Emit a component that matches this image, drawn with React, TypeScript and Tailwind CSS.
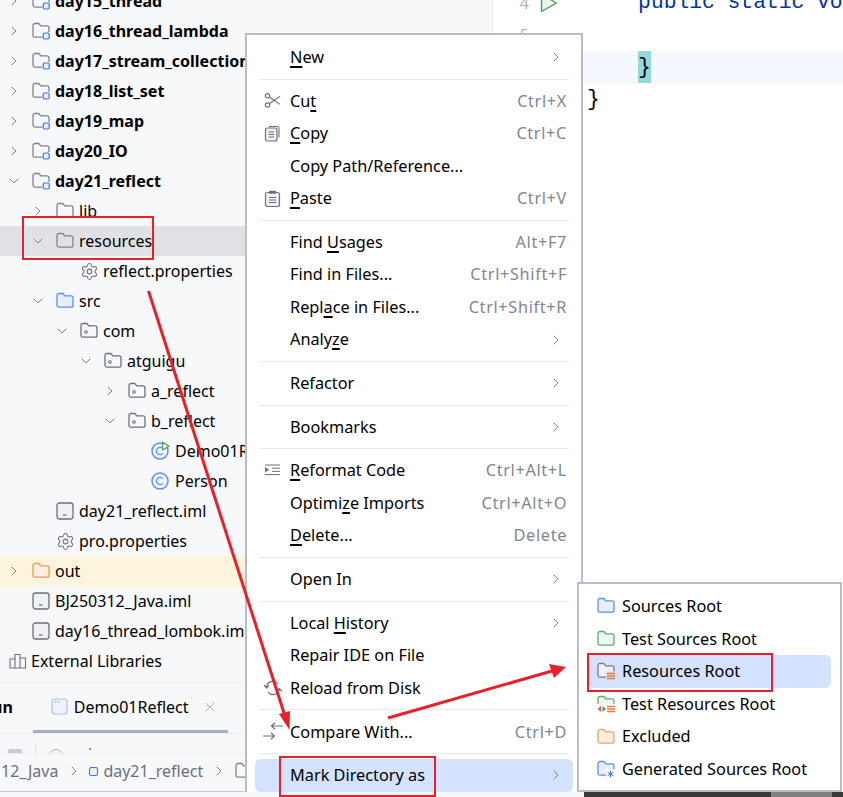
import { ChevronDown, ChevronRight, Settings, X } from 'lucide-react'

const FONT = "font-['Noto_Sans','Open_Sans',sans-serif]"

// ── Icons ─────────────────────────────────────────────────────────────────────
const FOLDER = 'M1 3.500a2 2 0 0 1 2-2h3.800l2 2.400h6.200a2 2 0 0 1 2 2v7.300a2 2 0 0 1-2 2h-12a2 2 0 0 1-2-2z'

function Folder({ stroke = '#6c707e', fill = 'none', children }: { stroke?: string; fill?: string; children?: React.ReactNode }) {
  return (
    <svg width="18" height="18" viewBox="0 0 18 18" fill="none" className="shrink-0">
      <path d={FOLDER} stroke={stroke} strokeWidth="1.3" fill={fill} />
      {children}
    </svg>
  )
}

function TreeIcon({ kind }: { kind: string }) {
  if (kind === 'module')
    return (
      <Folder stroke="#7f828c">
        <rect x="10" y="10" width="8" height="8" fill="#f7f8fa" />
        <rect x="11.200" y="11" width="6" height="6" rx="1.500" stroke="#3574f0" strokeWidth="1.200" fill="#e7effd" />
      </Folder>
    )
  if (kind === 'folder') return <Folder stroke="#7f828c" />
  if (kind === 'src') return <Folder stroke="#5e8ff0" fill="#e7effd" />
  if (kind === 'out') return <Folder stroke="#e99a55" fill="#fdeee0" />
  if (kind === 'package')
    return (
      <Folder stroke="#6c707e">
        <circle cx="6" cy="10" r="1.400" stroke="#6c707e" strokeWidth="1" />
      </Folder>
    )
  if (kind === 'gear') return <Settings size={19} strokeWidth={1.300} className="shrink-0 text-[#6c707e]" />
  if (kind === 'iml')
    return (
      <svg width="18" height="18" viewBox="0 0 18 18" fill="none" className="shrink-0">
        <rect x="1" y="1" width="16" height="16" rx="2.500" stroke="#6c707e" strokeWidth="1.300" fill="#f0f1f4" />
        <path d="M7 13h3.500" stroke="#6c707e" strokeWidth="1.200" />
      </svg>
    )
  if (kind === 'class' || kind === 'runclass')
    return (
      <svg width="20" height="20" viewBox="0 0 20 20" fill="none" className="shrink-0">
        <circle cx="9" cy="10" r="8" stroke="#5e8ff0" strokeWidth="1.500" fill="#eef3fe" />
        <path d="M11.800 7.700a3.600 3.600 0 1 0 0 4.600" stroke="#5e8ff0" strokeWidth="1.300" />
        {kind === 'runclass' && <path d="M11.500 1v8l6.500-3.800z" stroke="#4c9d5a" strokeWidth="1.100" fill="#eaf6ec" strokeLinejoin="round" />}
      </svg>
    )
  return null
}

function MenuIcon({ kind }: { kind: string }) {
  const s = '#6c707e'
  if (kind === 'cut')
    return (
      <svg width="17" height="17" viewBox="0 0 17 17" fill="none">
        <circle cx="3.500" cy="3.800" r="2.200" stroke={s} strokeWidth="1.200" />
        <circle cx="3.500" cy="13" r="2.200" stroke={s} strokeWidth="1.200" />
        <path d="M5.300 5 16 12.400M5.300 11.800 16 4.400" stroke={s} strokeWidth="1.100" />
      </svg>
    )
  if (kind === 'copy')
    return (
      <svg width="17" height="17" viewBox="0 0 17 17" fill="none">
        <path d="M5 1.500h8a2 2 0 0 1 2 2v9" stroke={s} strokeWidth="1.100" />
        <rect x="1.500" y="3" width="11.500" height="13" rx="2" stroke={s} strokeWidth="1.200" fill="#f0f1f4" />
        <path d="M4.500 7h5.500M4.500 9.500h5.500M4.500 12h5.500" stroke={s} />
      </svg>
    )
  if (kind === 'paste')
    return (
      <svg width="17" height="17" viewBox="0 0 17 17" fill="none">
        <rect x="1.500" y="2.500" width="14" height="14" rx="2" stroke={s} strokeWidth="1.200" fill="#f0f1f4" />
        <rect x="5" y="0.800" width="7" height="3" rx="1" fill={s} />
        <path d="M5 7.500h7M5 10h7M5 12.500h7" stroke={s} />
      </svg>
    )
  if (kind === 'reformat')
    return (
      <svg width="17" height="17" viewBox="0 0 17 17" fill="none">
        <path d="M1 3h15M8 6.200h8M8 9.400h8M1 12.600h15" stroke={s} strokeWidth="1" />
        <path d="M1 5v5.600l4-2.800z" fill="#3574f0" />
      </svg>
    )
  if (kind === 'reload')
    return (
      <svg width="20" height="20" viewBox="0 0 20 20" fill="none">
        <path d="M3.500 9a6.500 6.500 0 0 1 11.500-3.200M16.500 11A6.500 6.500 0 0 1 5 14.200" stroke={s} strokeWidth="1.200" />
        <path d="M1 7l2.500 2.800L6 7.500M14 12.500l2.500-2 2.500 2.800" stroke={s} strokeWidth="1.200" />
      </svg>
    )
  if (kind === 'compare')
    return (
      <svg width="22" height="20" viewBox="0 0 22 20" fill="none">
        <path d="M21 4H9.500M13 .8 9.500 4 13 7.200" stroke={s} strokeWidth="1.200" />
        <path d="M1 14h11M9 10.800l3.400 3.200L9 17.200" stroke={s} strokeWidth="1.200" />
      </svg>
    )
  return null
}

function SubIcon({ kind }: { kind: string }) {
  if (kind === 'sources') return <Folder stroke="#5e8ff0" fill="#e7effd" />
  if (kind === 'test') return <Folder stroke="#5fad6e" fill="#eef8f0" />
  if (kind === 'excluded') return <Folder stroke="#e9a768" fill="#fdeee0" />
  if (kind === 'resources')
    return (
      <Folder stroke="#7b7e8a" fill="#eef0f3">
        <rect x="9" y="9.500" width="9" height="8.500" fill="#d3e1fd" />
        <path d="M10 11.500h8M10 14h8M10 16.500h8" stroke="#e8793a" strokeWidth="1.300" />
      </Folder>
    )
  if (kind === 'testres')
    return (
      <Folder stroke="#5fad6e" fill="#eef8f0">
        <rect x="0" y="9" width="18" height="9" fill="#fff" />
        <path d="M4 11v6L.5 14z" fill="#db5c6c" />
        <path d="M5.500 11v6L9 14z" fill="#4c9d5a" />
        <path d="M10 11.500h8M10 14h8M10 16.500h8" stroke="#e8793a" strokeWidth="1.300" />
      </Folder>
    )
  return (
    <Folder stroke="#5e8ff0" fill="#e7effd">
      <rect x="9" y="9" width="9" height="9" fill="#fff" />
      <path d="M13.500 10.500v7M10.500 12.200l6 3.600M16.500 12.200l-6 3.600" stroke="#3574f0" strokeWidth="1" />
    </Folder>
  )
}

// ── Data ──────────────────────────────────────────────────────────────────────
const TREE = [
  { label: 'day15_thread', level: 0, icon: 'module', bold: true, arrow: 'right' },
  { label: 'day16_thread_lambda', level: 0, icon: 'module', bold: true, arrow: 'right' },
  { label: 'day17_stream_collection', level: 0, icon: 'module', bold: true, arrow: 'right' },
  { label: 'day18_list_set', level: 0, icon: 'module', bold: true, arrow: 'right' },
  { label: 'day19_map', level: 0, icon: 'module', bold: true, arrow: 'right' },
  { label: 'day20_IO', level: 0, icon: 'module', bold: true, arrow: 'right' },
  { label: 'day21_reflect', level: 0, icon: 'module', bold: true, arrow: 'down' },
  { label: 'lib', level: 1, icon: 'folder', arrow: 'right' },
  { label: 'resources', level: 1, icon: 'folder', arrow: 'down', bg: 'bg-[#dfe1e5]' },
  { label: 'reflect.properties', level: 2, icon: 'gear' },
  { label: 'src', level: 1, icon: 'src', arrow: 'down' },
  { label: 'com', level: 2, icon: 'package', arrow: 'down' },
  { label: 'atguigu', level: 3, icon: 'package', arrow: 'down' },
  { label: 'a_reflect', level: 4, icon: 'package', arrow: 'right' },
  { label: 'b_reflect', level: 4, icon: 'package', arrow: 'down' },
  { label: 'Demo01Reflect', level: 5, icon: 'runclass' },
  { label: 'Person', level: 5, icon: 'class' },
  { label: 'day21_reflect.iml', level: 1, icon: 'iml' },
  { label: 'pro.properties', level: 1, icon: 'gear' },
  { label: 'out', level: 0, icon: 'out', arrow: 'right', bg: 'bg-[#fdf4dd]' },
  { label: 'BJ250312_Java.iml', level: 0, icon: 'iml' },
  { label: 'day16_thread_lombok.iml', level: 0, icon: 'iml' },
]

type Item = { label: string; u?: number; keys?: string; icon?: string; more?: boolean; active?: boolean }

const MENU: Item[][] = [
  [{ label: 'New', u: 0, more: true }],
  [
    { label: 'Cut', u: 2, keys: 'Ctrl+X', icon: 'cut' },
    { label: 'Copy', u: 0, keys: 'Ctrl+C', icon: 'copy' },
    { label: 'Copy Path/Reference...' },
    { label: 'Paste', u: 0, keys: 'Ctrl+V', icon: 'paste' },
  ],
  [
    { label: 'Find Usages', u: 5, keys: 'Alt+F7' },
    { label: 'Find in Files...', keys: 'Ctrl+Shift+F' },
    { label: 'Replace in Files...', u: 4, keys: 'Ctrl+Shift+R' },
    { label: 'Analyze', u: 5, more: true },
  ],
  [{ label: 'Refactor', more: true }],
  [{ label: 'Bookmarks', more: true }],
  [
    { label: 'Reformat Code', u: 0, keys: 'Ctrl+Alt+L', icon: 'reformat' },
    { label: 'Optimize Imports', u: 6, keys: 'Ctrl+Alt+O' },
    { label: 'Delete...', u: 0, keys: 'Delete' },
  ],
  [{ label: 'Open In', more: true }],
  [
    { label: 'Local History', u: 6, more: true },
    { label: 'Repair IDE on File' },
    { label: 'Reload from Disk', icon: 'reload' },
  ],
  [{ label: 'Compare With...', keys: 'Ctrl+D', icon: 'compare' }],
  [{ label: 'Mark Directory as', more: true, active: true }],
]

const SUBMENU = [
  { label: 'Sources Root', icon: 'sources' },
  { label: 'Test Sources Root', icon: 'test' },
  { label: 'Resources Root', icon: 'resources', active: true },
  { label: 'Test Resources Root', icon: 'testres' },
  { label: 'Excluded', icon: 'excluded' },
  { label: 'Generated Sources Root', icon: 'generated' },
]

// ── Parts ─────────────────────────────────────────────────────────────────────
function Mnemonic({ label, u }: { label: string; u?: number }) {
  if (u === undefined) return <span>{label}</span>
  return (
    <span>
      {label.slice(0, u)}
      <span className="underline decoration-[1.5px] underline-offset-[3px]">{label[u]}</span>
      {label.slice(u + 1)}
    </span>
  )
}

function MenuRow({ item }: { item: Item }) {
  return (
    <div className={`flex h-[32.5px] items-center rounded-[6px] pr-[6px] ${item.active ? 'bg-[#d4e2ff]' : ''}`}>
      <span className="flex w-[35px] shrink-0 justify-center">{item.icon && <MenuIcon kind={item.icon} />}</span>
      <span className="flex-1 whitespace-nowrap text-black"><Mnemonic label={item.label} u={item.u} /></span>
      {item.keys && <span className="whitespace-nowrap tracking-[0.65px] text-[#818594]">{item.keys}</span>}
      {item.more && <ChevronRight size={16} strokeWidth={1.3} className="mr-[3px] text-[#6c707e]" />}
    </div>
  )
}

function ContextMenu() {
  return (
    <div className="absolute left-[245px] top-[33px] w-[338px] border-2 border-b-0 border-[#b9bdc9] bg-white px-[8px] pt-[6px] text-[16.3px]">
      {MENU.map((group, i) => (
        <div key={i}>
          {i > 0 && <div className="mx-[4px] my-[5.1px] h-px bg-[#ebecf0]" />}
          {group.map(item => <MenuRow key={item.label} item={item} />)}
        </div>
      ))}
    </div>
  )
}

function SubMenu() {
  return (
    <div className="absolute left-[577px] top-[582px] w-[265px] border-2 border-[#b9bdc9] bg-white px-[9px] pb-[4px] pt-[6px] text-[16.3px]">
      {SUBMENU.map(item => (
        <div key={item.label} className={`flex h-[32.6px] items-center gap-[7px] rounded-[6px] pl-[9px] ${item.active ? 'bg-[#d4e2ff]' : ''}`}>
          <SubIcon kind={item.icon} />
          <span className="whitespace-nowrap text-black">{item.label}</span>
        </div>
      ))}
    </div>
  )
}

function ProjectPanel() {
  return (
    <div className="flex h-[792px] w-[493px] shrink-0 flex-col border-r border-[#ebecf0] bg-[#f7f8fa] text-[16px] text-black">
      <div className="-mt-[14px] flex-1">
        {TREE.map(row => (
          <div key={row.label} className={`flex h-[30px] items-center whitespace-nowrap ${row.bg ?? ''}`}>
            <span className="flex w-[16px] shrink-0 justify-center" style={{ marginLeft: 6 + row.level * 24 }}>
              {row.arrow === 'right' && <ChevronRight size={16} strokeWidth={1.3} className="text-[#6c707e]" />}
              {row.arrow === 'down' && <ChevronDown size={16} strokeWidth={1.3} className="text-[#6c707e]" />}
            </span>
            <span className="ml-[10px] flex w-[18px] shrink-0 justify-center"><TreeIcon kind={row.icon} /></span>
            <span className={`ml-[5px] ${row.bold ? 'font-bold' : ''}`}>{row.label}</span>
          </div>
        ))}
        <div className="flex h-[30px] items-center">
          <svg width="18" height="16" viewBox="0 0 18 16" fill="none" className="ml-[9px]">
            <path d="M1 6h5v9H1zM6 1.500h5V15H6zM11 5h5.500v10H11z" stroke="#6c707e" strokeWidth="1.100" />
          </svg>
          <span className="ml-[4px]">External Libraries</span>
        </div>
      </div>

      <div className="flex h-[51px] items-stretch border-t border-[#ebecf0]">
        <span className="-ml-[8px] flex items-center pb-[3px] font-bold leading-none">un</span>
        <div className="ml-[20px] flex w-[195px] items-center border-b-[3px] border-[#a9b0c0] pl-[18px]">
          <svg width="17" height="17" viewBox="0 0 17 17" fill="none">
            <rect x="1" y="1" width="15" height="15" rx="2.500" stroke="#a9c3f5" strokeWidth="1.200" fill="#eef3fe" />
            <path d="M4 4h1.500M7 4h1.500" stroke="#7b8cab" />
          </svg>
          <span className="ml-[6px]">Demo01Reflect</span>
          <X size={16} strokeWidth={1.2} className="ml-[13px] text-[#a0a3ad]" />
        </div>
      </div>

      <div className="flex h-[20px] items-start overflow-hidden border-t border-[#ebecf0]">
        <span className="ml-[8px] mt-[15px] h-[14px] w-[14px] rounded-[2px] bg-[#c9ccd6]" />
        <span className="ml-[13px] mt-[9px] h-[12px] w-px bg-[#dfe1e5]" />
        <span className="ml-[12px] mt-[15px] h-[16px] w-[16px] rounded-full border border-[#b4b8c4]" />
        <span className="ml-[25px] mt-[14px] h-[2px] w-[2px] rounded-full bg-[#6c707e]" />
      </div>

      <div className="flex h-[39px] items-center border-y border-t-[#ebecf0] border-b-[#c9ccd6] pb-[3px] text-[#6c707e]">
        <span className="ml-[1px]">12_Java</span>
        <ChevronRight size={16} strokeWidth={1.3} className="ml-[8px]" />
        <span className="ml-[7px] h-[9px] w-[9px] rounded-[2px] border-[1.5px] border-[#3574f0] bg-[#e7effd]" />
        <span className="ml-[5px]">day21_reflect</span>
        <ChevronRight size={16} strokeWidth={1.3} className="ml-[8px]" />
        <span className="ml-[8px]"><Folder stroke="#7f828c" /></span>
      </div>
    </div>
  )
}

function Editor() {
  const code = "font-['Liberation_Mono',monospace] text-[21.3px]"
  return (
    <div className="-mt-[13px] min-w-0 flex-1 overflow-hidden bg-white">
      <div className="flex h-[32px] items-center">
        <span className="w-[36px] shrink-0 text-right text-[16px] text-[#aeb3c2]">4</span>
        <svg width="20" height="20" viewBox="0 0 20 20" fill="none" className="ml-[10px] shrink-0">
          <path d="M2.500 1.500v17l15-8.500z" stroke="#4c9d5a" strokeWidth="1.400" fill="#eaf6ec" strokeLinejoin="round" />
        </svg>
        <pre className={`ml-[28px] shrink-0 whitespace-pre text-[#0033b3] ${code}`}>{'    public static vo'}</pre>
      </div>
      <div className="flex h-[32px] items-center">
        <span className="w-[36px] shrink-0 text-right text-[16px] text-[#aeb3c2]">5</span>
      </div>
      <div className="flex h-[32px] items-stretch bg-[#f5f8fe] pl-[145px]">
        <span className={`flex w-[13px] items-center justify-center bg-[#93d9d9] pt-[2px] text-black ${code}`}>{'}'}</span>
      </div>
      <div className="flex h-[32px] items-center pl-[94px] pt-[2px]">
        <span className={`text-black ${code}`}>{'}'}</span>
      </div>
    </div>
  )
}

function Annotations() {
  return (
    <>
      <svg width="843" height="797" viewBox="0 0 843 797" fill="none" className="pointer-events-none absolute left-0 top-0">
        <path d="M148.500 291 285 716" stroke="#e8202a" strokeWidth="3" />
        <path d="M289.500 730 279 714l11-3z" fill="#e8202a" />
        <path d="M388 718 552 671" stroke="#e8202a" strokeWidth="3" />
        <path d="M566 667 549 664l5 14z" fill="#e8202a" />
      </svg>
      <div className="absolute left-[22px] top-[216px] h-[44px] w-[132px] border-2 border-[#e8202a]" />
      <div className="absolute left-[279px] top-[756px] h-[41px] w-[157px] border-2 border-[#e8202a]" />
      <div className="absolute left-[587px] top-[653px] h-[39px] w-[186px] border-2 border-[#e8202a]" />
    </>
  )
}

export default function App() {
  return (
    <div className={`relative h-[797px] w-[843px] overflow-hidden bg-white ${FONT}`}>
      <div className="flex h-[792px] overflow-hidden">
        <ProjectPanel />
        <Editor />
      </div>
      <div className="flex h-[5px]">
        <div className="w-[584px] bg-[#f7f8fa]" />
        <div className="w-[187px] bg-[#3a3a3a]" />
        <div className="w-[61px] bg-[#808080]" />
        <div className="flex-1 bg-[#3a3a3a]" />
      </div>
      <ContextMenu />
      <SubMenu />
      <Annotations />
    </div>
  )
}
